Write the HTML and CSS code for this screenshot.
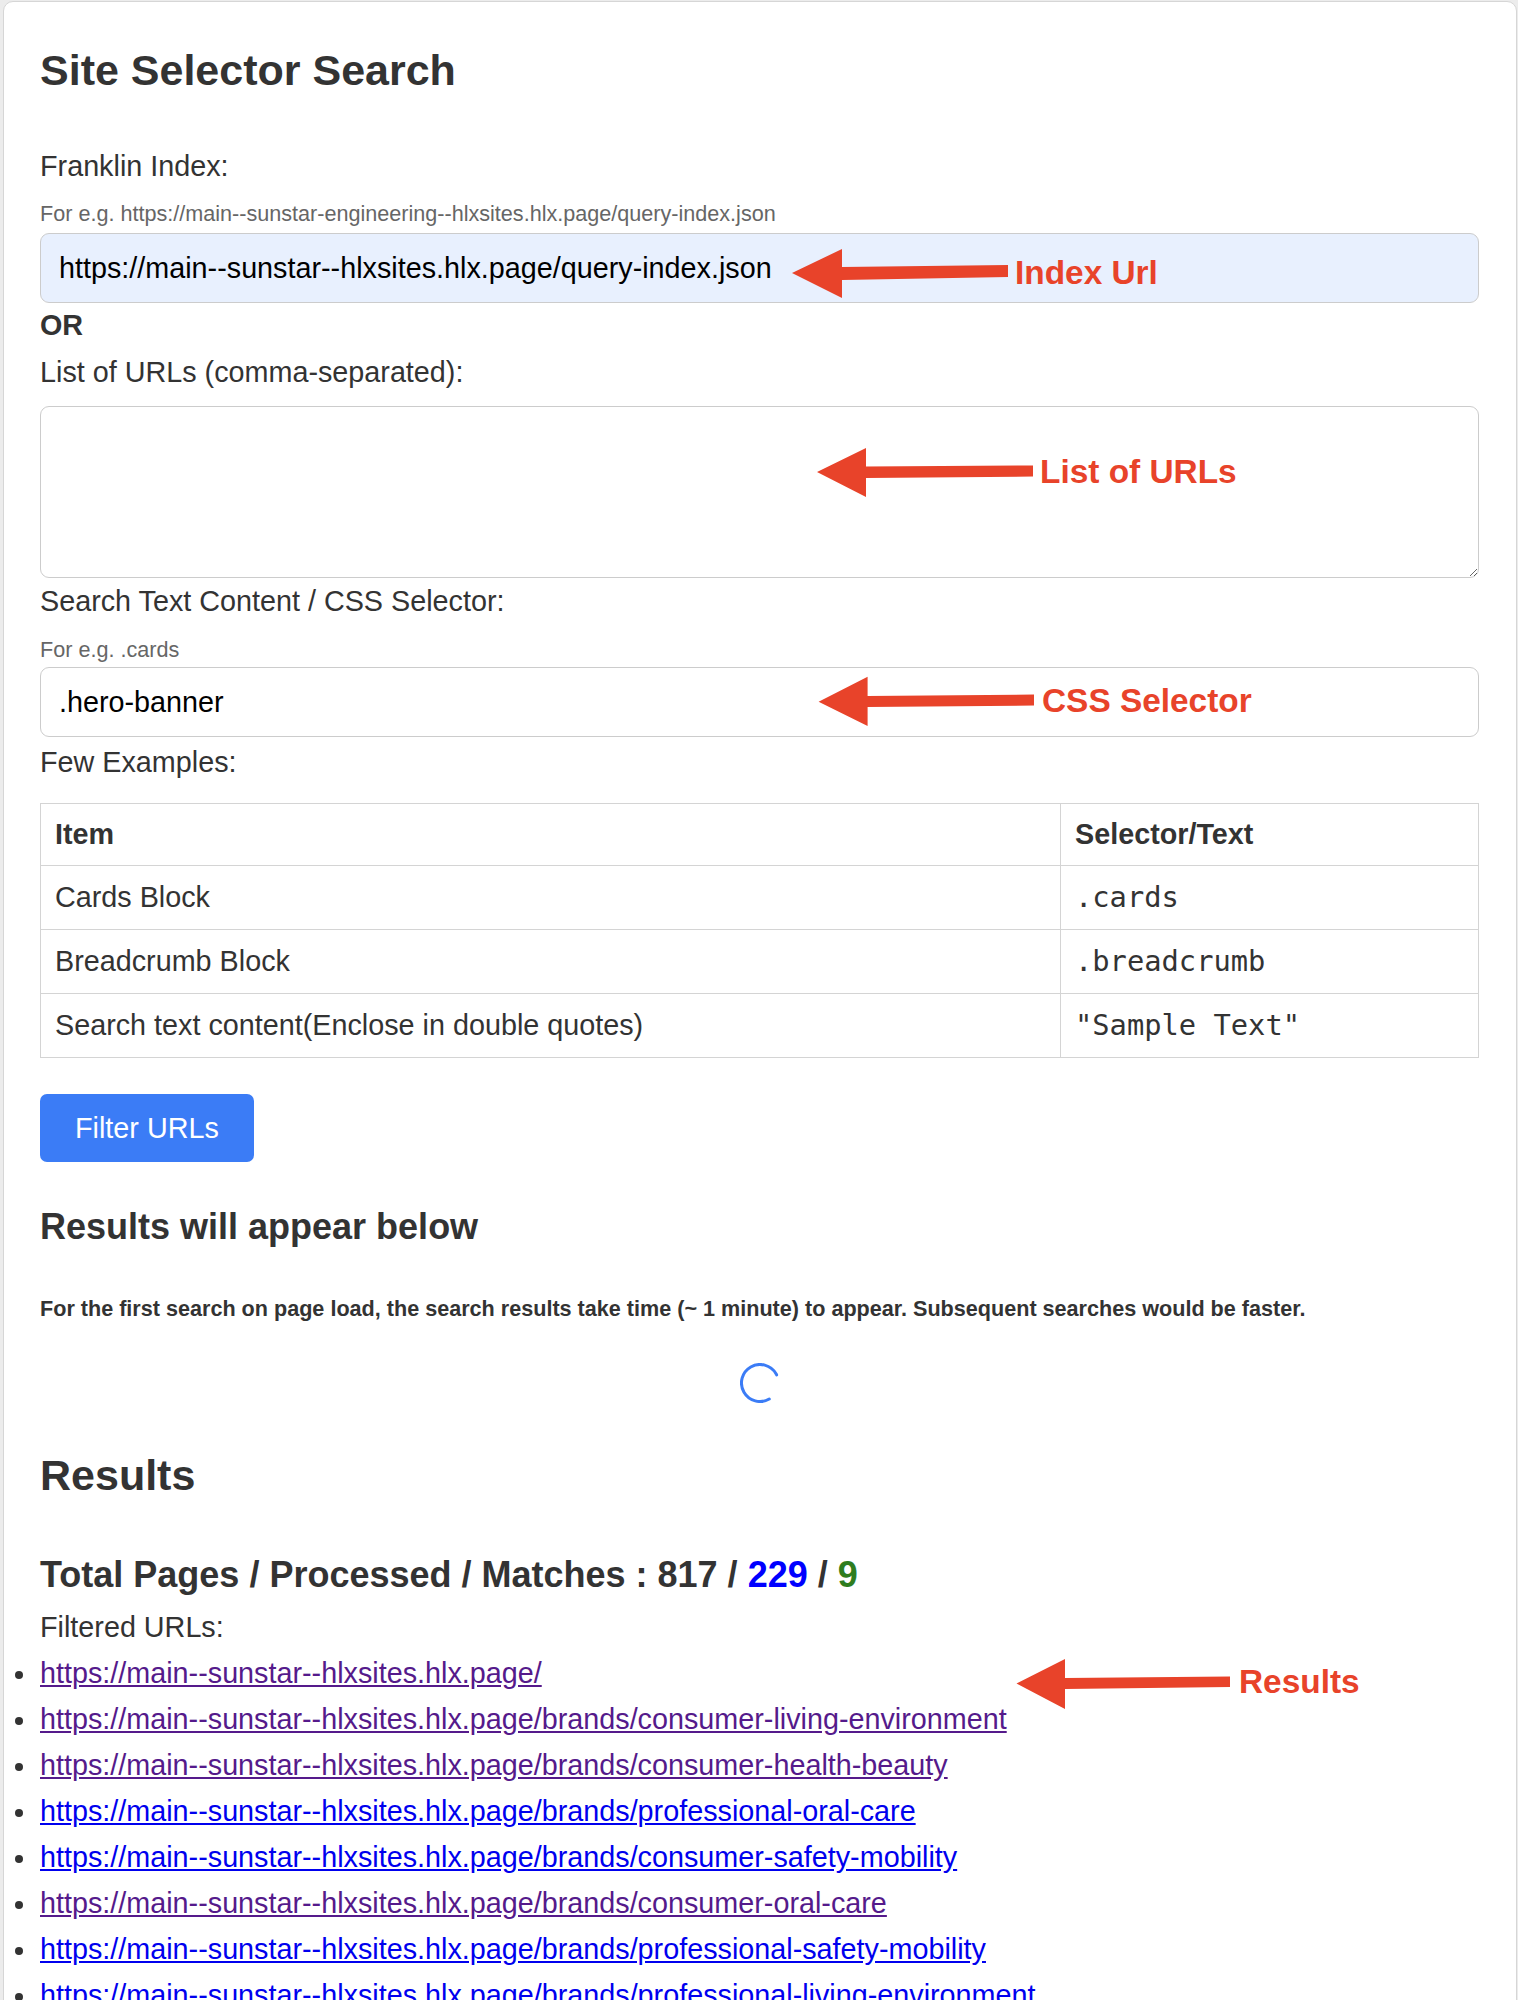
FILE: index.html
```html
<!DOCTYPE html>
<html lang="en">
<head>
<meta charset="utf-8">
<title>Site Selector Search</title>
<link rel="stylesheet" href="styles.css">
</head>
<body>
<main class="card">
  <h1 class="title">Site Selector Search</h1>

  <label class="label label-index" for="index-url">Franklin Index:</label>
  <p class="hint hint-index">For e.g. https://main--sunstar-engineering--hlxsites.hlx.page/query-index.json</p>
  <input id="index-url" class="field field-autofill" type="text" value="https://main--sunstar--hlxsites.hlx.page/query-index.json">

  <p class="or">OR</p>

  <label class="label label-urls" for="url-list">List of URLs (comma-separated):</label>
  <textarea id="url-list" class="textarea"></textarea>

  <label class="label label-selector" for="selector">Search Text Content / CSS Selector:</label>
  <p class="hint hint-selector">For e.g. .cards</p>
  <input id="selector" class="field field-selector" type="text" value=".hero-banner">

  <p class="label label-examples">Few Examples:</p>
  <table class="examples">
    <colgroup><col class="col-item"><col class="col-sel"></colgroup>
    <thead>
      <tr><th>Item</th><th>Selector/Text</th></tr>
    </thead>
    <tbody>
      <tr><td>Cards Block</td><td><code>.cards</code></td></tr>
      <tr><td>Breadcrumb Block</td><td><code>.breadcrumb</code></td></tr>
      <tr><td>Search text content(Enclose in double quotes)</td><td><code>"Sample Text"</code></td></tr>
    </tbody>
  </table>

  <button class="btn" type="button">Filter URLs</button>

  <h3 class="subhead">Results will appear below</h3>
  <p class="note">For the first search on page load, the search results take time (~ 1 minute) to appear. Subsequent searches would be faster.</p>

  <div class="spinner">
    <svg width="40" height="40" viewBox="0 0 40 40"><circle cx="20" cy="20" r="18.5" fill="none" stroke="#3b7cf6" stroke-width="3" stroke-linecap="round" stroke-dasharray="88 30" transform="rotate(60 20 20)"/></svg>
  </div>

  <h2 class="results-title">Results</h2>
  <h3 class="totals">Total Pages / Processed / Matches : 817 / <span class="processed">229</span> / <span class="matches">9</span></h3>
  <p class="label label-filtered">Filtered URLs:</p>
  <ul class="urls">
    <li><a class="visited" href="#">https://main--sunstar--hlxsites.hlx.page/</a></li>
    <li><a class="visited" href="#">https://main--sunstar--hlxsites.hlx.page/brands/consumer-living-environment</a></li>
    <li><a class="visited" href="#">https://main--sunstar--hlxsites.hlx.page/brands/consumer-health-beauty</a></li>
    <li><a class="unvisited" href="#">https://main--sunstar--hlxsites.hlx.page/brands/professional-oral-care</a></li>
    <li><a class="unvisited" href="#">https://main--sunstar--hlxsites.hlx.page/brands/consumer-safety-mobility</a></li>
    <li><a class="visited" href="#">https://main--sunstar--hlxsites.hlx.page/brands/consumer-oral-care</a></li>
    <li><a class="unvisited" href="#">https://main--sunstar--hlxsites.hlx.page/brands/professional-safety-mobility</a></li>
    <li><a class="unvisited" href="#">https://main--sunstar--hlxsites.hlx.page/brands/professional-living-environment</a></li>
  </ul>
</main>

<div class="annotations" aria-hidden="true">
  <svg class="arrows" width="1518" height="2000" viewBox="0 0 1518 2000">
    <polygon points="792,273 842,249 842,267 1008,265 1008,277 842,280 842,298"/>
    <polygon points="817,472 866,448 866,466.5 1033,465.5 1033,476.5 866,478 866,497"/>
    <polygon points="818.6,701.7 867.6,676.7 867.6,696 1034,694.5 1034,705.5 867.6,707 867.6,726"/>
    <polygon points="1016.5,1683.5 1065,1659 1065,1678 1230,1676.5 1230,1687 1065,1689 1065,1709"/>
  </svg>
  <span class="tag tag-index">Index Url</span>
  <span class="tag tag-urls">List of URLs</span>
  <span class="tag tag-css">CSS Selector</span>
  <span class="tag tag-results">Results</span>
</div>
</body>
</html>
```

FILE: styles.css
```css
* { box-sizing: border-box; }

html, body { margin: 0; }

body {
  position: relative;
  padding: 1px 1px 0 3px;
  background: #ececec;
  font-family: "Liberation Sans", Arial, Helvetica, sans-serif;
  color: #333;
  min-height: 2000px;
}

.card {
  background: #fff;
  border: 1px solid #d6d6d6;
  border-radius: 10px;
  padding: 42px 37px 60px 36px;
}

.title {
  margin: 0;
  font-size: 43px;
  line-height: 52px;
  font-weight: bold;
}

.label {
  display: block;
  margin: 0;
  font-size: 28.75px;
  line-height: 33px;
}

.label-index { margin-top: 54px; }
.label-urls { margin-top: 14px; }
.label-selector { margin-top: 7px; }
.label-examples { margin-top: 9px; }
.label-filtered { margin-top: 15px; }

.hint {
  margin: 18px 0 0;
  font-size: 21.6px;
  line-height: 25px;
  color: #666;
}

.hint-selector { margin-top: 19px; }

.field {
  display: block;
  width: 100%;
  height: 70px;
  margin: 7px 0 0;
  padding: 0 18px;
  border: 1px solid #ccc;
  border-radius: 9px;
  font-family: "Liberation Sans", Arial, Helvetica, sans-serif;
  font-size: 28.75px;
  line-height: 33px;
  color: #000;
  background: #fff;
  outline: none;
}

.field-autofill { background: #e8f0fe; }
.field-selector { margin-top: 5px; }

.or {
  margin: 6px 0 0;
  font-size: 28.75px;
  line-height: 33px;
  font-weight: bold;
}

.textarea {
  display: block;
  width: 100%;
  height: 172px;
  margin: 17px 0 0;
  padding: 14px 18px;
  border: 1px solid #ccc;
  border-radius: 9px;
  font-family: "Liberation Sans", Arial, Helvetica, sans-serif;
  font-size: 28.75px;
  resize: vertical;
  outline: none;
  background: #fff;
}

.examples {
  width: 100%;
  margin-top: 24px;
  border-collapse: collapse;
  font-size: 28.75px;
  color: #333;
}

.col-item { width: 1020px; }

.examples th,
.examples td {
  border: 1px solid #d4d4d4;
  padding: 14px 14px;
  text-align: left;
  vertical-align: middle;
}

.examples th { line-height: 33px; font-weight: bold; }
.examples td { line-height: 35px; font-weight: normal; }

.examples code {
  font-family: "DejaVu Sans Mono", "Liberation Mono", monospace;
  font-size: 28.75px;
}

.btn {
  display: block;
  height: 68px;
  margin-top: 36px;
  padding: 0 35px;
  border: none;
  border-radius: 7px;
  background: #3b7cf6;
  color: #fff;
  font-family: "Liberation Sans", Arial, Helvetica, sans-serif;
  font-size: 28.75px;
  line-height: 33px;
}

.subhead {
  margin: 44px 0 0;
  font-size: 36px;
  line-height: 42px;
  font-weight: bold;
}

.note {
  margin: 48px 0 0;
  font-size: 21.6px;
  line-height: 25px;
  font-weight: bold;
}

.spinner {
  display: flex;
  justify-content: center;
  margin-top: 42px;
  height: 40px;
}

.results-title {
  margin: 46px 0 0;
  font-size: 43px;
  line-height: 52px;
  font-weight: bold;
}

.totals {
  margin: 53px 0 0;
  font-size: 36px;
  line-height: 42px;
  font-weight: bold;
}

.processed { color: #0000ff; }
.matches { color: #2f7d1f; }

.urls {
  margin: 6px 0 0;
  padding: 0;
  list-style: none;
}

.urls li {
  font-size: 28.75px;
  line-height: 46px;
  white-space: nowrap;
}

.urls li::before {
  content: "";
  display: inline-block;
  width: 8px;
  height: 8px;
  margin-left: -25px;
  margin-right: 17px;
  border-radius: 50%;
  background: #333;
  vertical-align: middle;
}

.urls a { text-decoration: underline; }
.urls a.visited { color: #551a8b; }
.urls a.unvisited { color: #0000ee; }

/* screenshot annotations drawn over the page */
.annotations {
  position: absolute;
  top: 0;
  left: 0;
  width: 1518px;
  height: 2000px;
  pointer-events: none;
}

.arrows {
  position: absolute;
  top: 0;
  left: 0;
  fill: #e8432a;
}

.tag {
  position: absolute;
  font-family: "Liberation Sans", Arial, Helvetica, sans-serif;
  font-weight: bold;
  font-size: 33.4px;
  line-height: 33.4px;
  color: #e8432a;
  white-space: nowrap;
}

.tag-index { left: 1015px; top: 256px; }
.tag-urls { left: 1040px; top: 455px; }
.tag-css { left: 1042px; top: 684px; }
.tag-results { left: 1239px; top: 1665px; }
```
